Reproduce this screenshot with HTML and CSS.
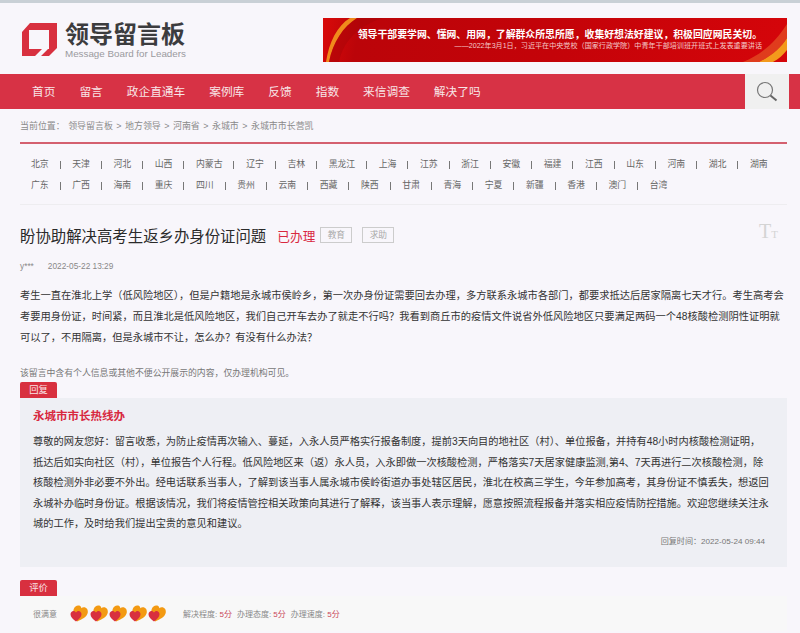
FILE: index.html
```html
<!DOCTYPE html>
<html lang="zh-CN">
<head>
  <meta charset="UTF-8">
  <meta name="viewport" content="width=device-width, initial-scale=1.0">
  <title>领导留言板</title>
  <link rel="stylesheet" href="styles.css">
</head>
<body>
  <header class="top">
    <div class="brand">
      <svg class="logo" viewBox="0 0 35 33" width="35" height="33">
        <path fill="#d8303f" d="M0 9L8 0H35V25L27 33H19L26 26H27V7H7V26H20L13 33H0Z"/>
      </svg>
      <div class="brand-text">
        <div class="brand-name">领导留言板</div>
        <div class="brand-sub">Message Board for Leaders</div>
      </div>
    </div>
    <div class="banner">
      <svg class="banner-art" viewBox="0 0 464 44" width="464" height="44">
        <path fill="#f08a1c" d="M3 44C6 24 14 8 27 0H34C20 9 10 24 6 44Z"/>
        <path fill="#a80308" opacity="0.5" d="M6 44C10 24 20 9 34 0H60C34 8 20 24 16 44Z"/>
        <path fill="#f39a1c" d="M436 44C448 38 458 30 464 20V32C460 37 456 41 450 44Z"/>
        <path fill="#e8602a" opacity="0.6" d="M420 44C440 36 454 22 464 6V20C458 30 448 38 436 44Z"/>
      </svg>
      <div class="banner-main">领导干部要学网、懂网、用网，了解群众所思所愿，收集好想法好建议，积极回应网民关切。</div>
      <div class="banner-sub">——2022年3月1日，习近平在中央党校（国家行政学院）中青年干部培训班开班式上发表重要讲话</div>
    </div>
  </header>

  <nav class="nav">
    <div class="nav-links">
      <a>首页</a><a>留言</a><a>政企直通车</a><a>案例库</a><a>反馈</a><a>指数</a><a>来信调查</a><a>解决了吗</a>
    </div>
    <div class="nav-search">
      <svg viewBox="0 0 22 22" width="22" height="22">
        <circle cx="9" cy="9" r="7.5" fill="none" stroke="#777" stroke-width="1.2"/>
        <path d="M14.5 14.5L20.5 19.5" stroke="#666" stroke-width="2"/>
      </svg>
    </div>
  </nav>

  <main class="page">
    <div class="crumbs">当前位置： 领导留言板 &gt; 地方领导 &gt; 河南省 &gt; 永城市 &gt; 永城市市长营凯</div>

    <div class="areas">
      <div class="area-row"><a>北京</a><a>天津</a><a>河北</a><a>山西</a><a>内蒙古</a><a>辽宁</a><a>吉林</a><a>黑龙江</a><a>上海</a><a>江苏</a><a>浙江</a><a>安徽</a><a>福建</a><a>江西</a><a>山东</a><a>河南</a><a>湖北</a><a>湖南</a></div>
      <div class="area-row"><a>广东</a><a>广西</a><a>海南</a><a>重庆</a><a>四川</a><a>贵州</a><a>云南</a><a>西藏</a><a>陕西</a><a>甘肃</a><a>青海</a><a>宁夏</a><a>新疆</a><a>香港</a><a>澳门</a><a>台湾</a></div>
    </div>

    <div class="title-row">
      <h1>盼协助解决高考生返乡办身份证问题</h1>
      <span class="state">已办理</span>
      <span class="tag">教育</span>
      <span class="tag">求助</span>
      <span class="font-size">T<small>T</small></span>
    </div>
    <div class="meta"><span>y***</span><span>2022-05-22 13:29</span></div>

    <p class="content">考生一直在淮北上学（低风险地区），但是户籍地是永城市侯岭乡，第一次办身份证需要回去办理，多方联系永城市各部门，都要求抵达后居家隔离七天才行。考生高考会考要用身份证，时间紧，而且淮北是低风险地区，我们自己开车去办了就走不行吗？我看到商丘市的疫情文件说省外低风险地区只要满足两码一个48核酸检测阴性证明就可以了，不用隔离，但是永城市不让，怎么办？有没有什么办法？</p>

    <p class="note">该留言中含有个人信息或其他不便公开展示的内容，仅办理机构可见。</p>

    <div class="label">回复</div>
    <section class="reply">
      <h2>永城市市长热线办</h2>
      <p>尊敬的网友您好：留言收悉，为防止疫情再次输入、蔓延，入永人员严格实行报备制度，提前3天向目的地社区（村）、单位报备，并持有48小时内核酸检测证明，抵达后如实向社区（村），单位报告个人行程。低风险地区来（返）永人员，入永即做一次核酸检测，严格落实7天居家健康监测,第4、7天再进行二次核酸检测，除核酸检测外非必要不外出。经电话联系当事人，了解到该当事人属永城市侯岭街道办事处辖区居民，淮北在校高三学生，今年参加高考，其身份证不慎丢失，想返回永城补办临时身份证。根据该情况，我们将疫情管控相关政策向其进行了解释，该当事人表示理解，愿意按照流程报备并落实相应疫情防控措施。欢迎您继续关注永城的工作，及时给我们提出宝贵的意见和建议。</p>
      <div class="reply-time">回复时间：2022-05-24 09:44</div>
    </section>

    <div class="label label-rate">评价</div>
    <section class="rate">
      <span class="rate-word">很满意</span>
      <span class="hearts">
        <svg viewBox="0 0 20 18" width="20" height="18"><use href="#hearts"/></svg>
        <svg viewBox="0 0 20 18" width="20" height="18"><use href="#hearts"/></svg>
        <svg viewBox="0 0 20 18" width="20" height="18"><use href="#hearts"/></svg>
        <svg viewBox="0 0 20 18" width="20" height="18"><use href="#hearts"/></svg>
        <svg viewBox="0 0 20 18" width="20" height="18"><use href="#hearts"/></svg>
      </span>
      <span class="score">解决程度: <b>5分</b></span>
      <span class="score">办理态度: <b>5分</b></span>
      <span class="score">办理速度: <b>5分</b></span>
    </section>
  </main>

  <svg class="defs" width="0" height="0">
    <defs>
      <g id="hearts">
        <path fill="#f39a12" transform="rotate(18 10 9)" d="M9.500 17C5 13 2.500 10 2.500 6.200C2.500 3.200 4.500 1.200 6.800 1.200C8 1.200 9 1.900 9.500 3C10 1.900 11.200 1.200 12.500 1.200C15 1.200 17 3.200 17 6.200C17 10 14 13 9.500 17Z"/>
        <path fill="#d8303f" d="M6 16.500C2.800 14 0.500 12 0.500 9.200C0.500 7.300 1.900 6 3.500 6C4.500 6 5.500 6.600 6 7.500C6.500 6.600 7.500 6 8.500 6C10.100 6 11.500 7.300 11.500 9.200C11.500 12 9.200 14 6 16.500Z"/>
      </g>
    </defs>
  </svg>
</body>
</html>
```

FILE: styles.css
```css
* {
  box-sizing: border-box;
}

body {
  margin: 0;
  height: 633px;
  overflow: hidden;
  border-top: 3px solid #c9d0d6;
  background-color: #f8f6fb;
  font-family: "Liberation Sans", "Noto Sans CJK SC", sans-serif;
  color: #333;
}

h1, h2, p {
  margin: 0;
  font-weight: normal;
}

.top {
  display: flex;
  justify-content: space-between;
  height: 71px;
  padding: 15px 13px 0 22px;
}

.brand {
  display: flex;
  gap: 8px;
  padding-top: 5px;
}

.brand-name {
  font-size: 24px;
  line-height: 23px;
  font-weight: bold;
  color: #3c3c3e;
}

.brand-sub {
  margin-top: 2px;
  font-size: 9.8px;
  line-height: 11px;
  color: #9a9a9e;
}

.banner {
  position: relative;
  width: 464px;
  height: 44px;
  padding-right: 25px;
  text-align: right;
  color: #fff;
  background: linear-gradient(100deg, #d90a0a 0%, #bb0409 8%, #c40309 50%, #d5050a 100%);
}

/* decoration only, the swooshes in the two corners */
.banner-art {
  position: absolute;
  top: 0;
  left: 0;
}

.banner-main, .banner-sub {
  position: relative;
}

.banner-main {
  padding-top: 11px;
  font-size: 9.87px;
  line-height: 12px;
  font-weight: bold;
}

.banner-sub {
  font-size: 7.1px;
  line-height: 10px;
  color: #f4c9c9;
}

.nav {
  display: flex;
  height: 35px;
  background-color: #d73245;
}

.nav-links {
  display: flex;
  flex: 1;
  gap: 24px;
  padding-left: 32px;
  font-size: 11.7px;
  line-height: 35px;
  color: #f7e6e8;
}

.nav-search {
  display: flex;
  align-items: center;
  justify-content: center;
  width: 44px;
  margin-right: 11px;
  background-color: #f0f0f0;
}

.page {
  padding: 0 13px 0 20px;
}

.crumbs {
  height: 35px;
  border-bottom: 2px solid #d4606f;
  font-size: 8.95px;
  line-height: 35px;
  word-spacing: 1px;
  color: #8a8a8a;
}

.areas {
  height: 61px;
  padding: 10px 0 0 11px;
  border-bottom: 1px solid #eeedf0;
  font-size: 8.9px;
  line-height: 21px;
  color: #666;
}

.area-row {
  display: flex;
}

.area-row a {
  padding-right: 11.75px;
  margin-right: 11.75px;
  background: linear-gradient(#777, #777) right center / 1px 8px no-repeat;
}

.area-row a:last-child {
  padding-right: 0;
  margin-right: 0;
  background: none;
}

.title-row {
  display: flex;
  align-items: center;
  height: 44px;
  margin-top: 8px;
}

.title-row h1 {
  font-size: 15.4px;
  color: #2a2a2a;
}

.state {
  margin-left: 11px;
  font-size: 12.7px;
  color: #d8283f;
}

.tag {
  width: 32px;
  height: 16px;
  margin-left: 5px;
  margin-right: 5px;
  border: 1px solid #ccc;
  font-size: 8.7px;
  line-height: 14px;
  text-align: center;
  color: #aaa;
}

.font-size {
  margin-left: auto;
  margin-top: -8px;
  margin-right: 9px;
  font-family: "Liberation Serif", serif;
  font-size: 20px;
  color: #d4d4d4;
}

.font-size small {
  font-size: 11px;
}

.meta {
  display: flex;
  gap: 14px;
  margin-top: 3px;
  font-size: 8.3px;
  line-height: 12px;
  color: #888;
}

.content {
  margin-top: 13px;
  font-size: 10.25px;
  line-height: 21px;
}

.note {
  margin-top: 18px;
  font-size: 8.85px;
  line-height: 14px;
  color: #777;
}

.label {
  width: 37px;
  height: 16px;
  margin-top: 2px;
  border-radius: 2px 2px 0 0;
  font-size: 9.3px;
  line-height: 16px;
  text-align: center;
  color: #f8e3e5;
  background-color: #d8303f;
}

.reply {
  height: 169px;
  padding: 11px 18px 0 13px;
  background-color: #eeeff4;
}

.reply h2 {
  font-size: 11.5px;
  line-height: 14px;
  font-weight: bold;
  color: #d8283f;
}

.reply p {
  margin-top: 9px;
  font-size: 10.22px;
  line-height: 20.5px;
}

.reply-time {
  margin-top: 1px;
  padding-right: 4px;
  font-size: 8.1px;
  line-height: 12px;
  text-align: right;
  color: #777;
}

.label-rate {
  margin-top: 13px;
}

.rate {
  display: flex;
  align-items: center;
  height: 35px;
  padding-left: 13px;
  background-color: #f8f8f8;
  font-size: 8px;
  color: #888;
}

.rate-word {
  width: 37px;
}

.hearts {
  display: flex;
  width: 113px;
}

.hearts svg {
  margin-right: -0.5px;
}

.score {
  margin-right: 5px;
}

.score b {
  font-weight: normal;
  color: #c9485a;
}

.defs {
  position: absolute;
}
```
